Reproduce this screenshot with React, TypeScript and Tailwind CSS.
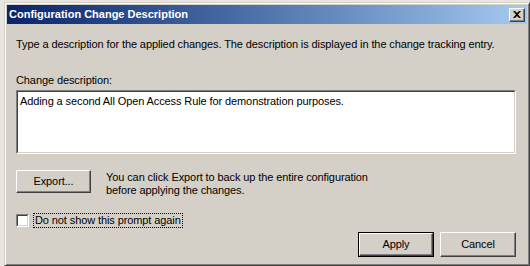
import React from 'react';

const raised =
  'border border-t-white border-l-white border-r-[#404040] border-b-[#404040] shadow-[inset_-1px_-1px_0_#808080]';

const Button: React.FC<{ label: string; isDefault?: boolean; className?: string }> = ({
  label,
  isDefault,
  className,
}) => (
  <div className={`${isDefault ? 'border border-black' : ''} ${className ?? ''}`}>
    <button
      className={`${raised} bg-[#d4d0c8] w-full h-full text-[11px] text-black flex items-center justify-center`}
    >
      {label}
    </button>
  </div>
);

export default function App() {
  return (
    <div className="w-[530px] h-[266px] bg-[#e8e6e0] pl-[4px] pt-[2px] overflow-hidden">
      <div
        className="w-[526px] h-[264px] bg-[#d4d0c8] border border-t-[#d4d0c8] border-l-[#d4d0c8] border-r-[#404040] border-b-[#404040] shadow-[inset_1px_1px_0_#ffffff,inset_-1px_-1px_0_#808080] p-[2px] flex flex-col text-black"
        style={{ fontFamily: '"Liberation Sans", Arial, sans-serif' }}
      >
        {/* title bar */}
        <div className="h-[19px] flex items-center justify-between pl-[2px] pr-[2px] bg-gradient-to-r from-[#0a246a] to-[#a6caf0]">
          <span className="text-white font-bold text-[11px] leading-none">Configuration Change Description</span>
          <div className={`${raised} bg-[#d4d0c8] w-[16px] h-[14px] flex items-center justify-center`}>
            <svg width="8" height="7" viewBox="0 0 8 7">
              <path d="M0 0h2l2 2 2-2h2L5 3.5 8 7H6L4 5 2 7H0l3-3.5z" fill="#000" />
            </svg>
          </div>
        </div>

        <div className="flex-1 flex flex-col pl-[9px] pr-[11px] text-[11px] leading-[13px] tracking-[-0.1px]">
          <p className="mt-[14px]">
            Type a description for the applied changes. The description is displayed in the change tracking entry.
          </p>
          <p className="mt-[23px]">Change description:</p>
          <div className="mt-[3px] h-[64px] border border-t-[#808080] border-l-[#808080] border-r-white border-b-white">
            <div className="h-full bg-white border border-t-[#404040] border-l-[#404040] border-r-[#d4d0c8] border-b-[#d4d0c8] px-[2px] pt-[3px]">
              Adding a second All Open Access Rule for demonstration purposes.
            </div>
          </div>

          <div className="mt-[16px] flex items-start gap-[15px]">
            <Button label="Export..." className="w-[75px] h-[23px]" />
            <p className="pt-[1px]">
              You can click Export to back up the entire configuration
              <br />
              before applying the changes.
            </p>
          </div>

          <div className="mt-[16px] flex items-center gap-[4px]">
            <div className="w-[13px] h-[13px] border border-t-[#808080] border-l-[#808080] border-r-white border-b-white">
              <div className="w-full h-full bg-white border border-t-[#404040] border-l-[#404040] border-r-[#d4d0c8] border-b-[#d4d0c8]" />
            </div>
            <span className="border border-dotted border-black px-[1px]">Do not show this prompt again</span>
          </div>

          <div className="mt-[4px] flex justify-end gap-[6px]">
            <Button label="Apply" isDefault className="w-[76px] h-[25px]" />
            <Button label="Cancel" className="w-[76px] h-[25px]" />
          </div>
        </div>
      </div>
    </div>
  );
}
